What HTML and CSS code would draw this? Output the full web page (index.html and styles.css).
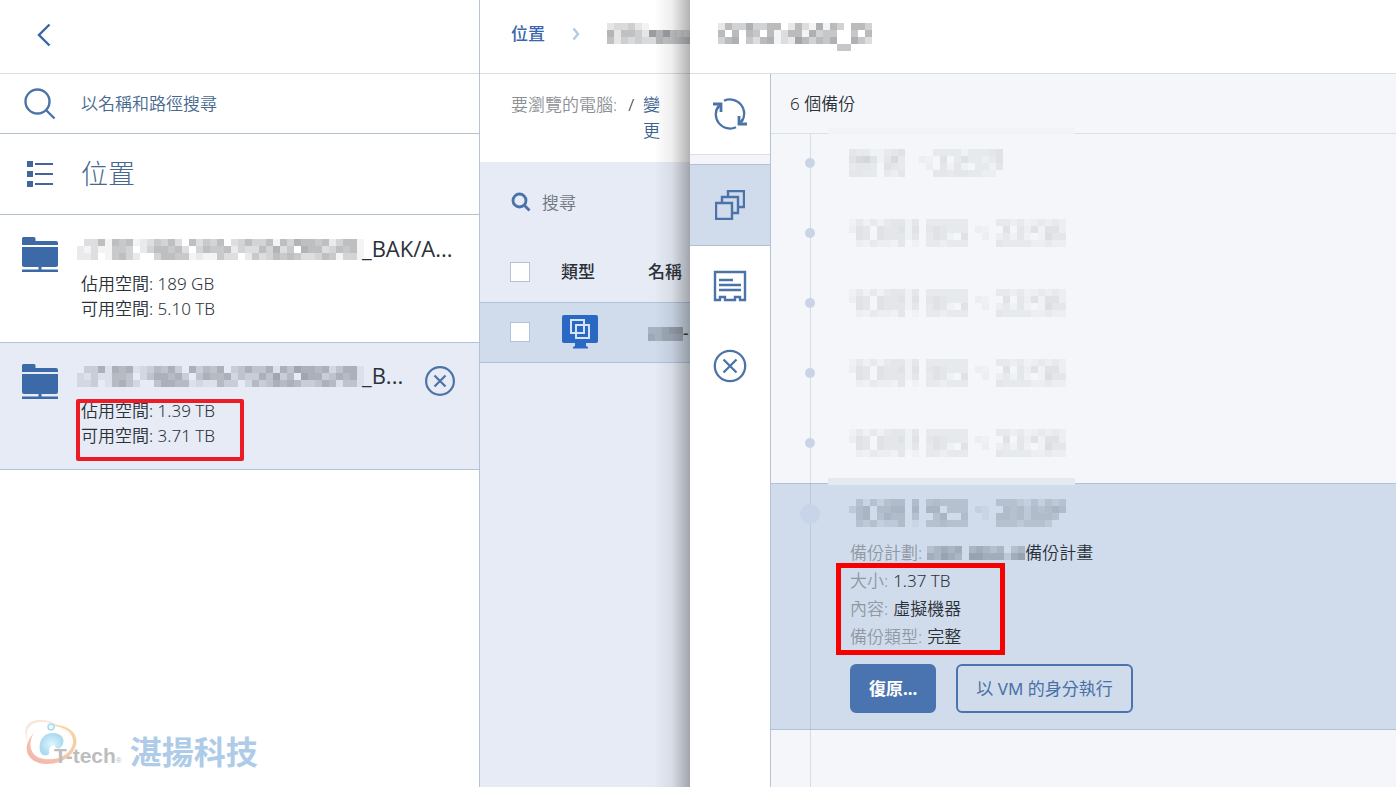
FILE: index.html
```html
<!DOCTYPE html>
<html lang="zh-Hant">
<head>
<meta charset="utf-8">
<title>備份位置</title>
<link rel="stylesheet" href="styles.css">
</head>
<body>
<div class="app">
  <aside class="places">
    <header class="bar places-bar">
      <button class="icon-btn" aria-label="返回"><svg width="14" height="24" viewBox="0 0 14 24"><path d="M12.500 1.500L2 12l10.500 10.500" fill="none" stroke="#3766a8" stroke-width="2.400"/></svg></button>
    </header>
    <label class="find">
      <svg width="32" height="32" viewBox="0 0 32 32" fill="none" stroke="#4c73a8" stroke-width="2.400"><circle cx="13.500" cy="13.500" r="12"/><path d="M22 22l8.500 8.500"/></svg>
      <input class="find-input" type="text" placeholder="以名稱和路徑搜尋">
    </label>
    <div class="places-head">
      <svg width="28" height="28" viewBox="0 0 28 28" fill="#42659c"><path d="M1 1h6v6H1zM1 11h6v6H1zM1 21h6v6H1zM9 3h18v2H9zM9 13h18v2H9zM9 23h18v2H9z"/></svg>
      <h1 class="places-title">位置</h1>
    </div>
    <section class="place">
      <svg class="place-icon" width="36" height="36" viewBox="0 0 36 36" fill="#3c69a7"><path d="M0 1.500Q0 0 1.500 0H12q1.500 0 1.500 1.500V4H34q2 0 2 2v2H0zM0 10h36v18q0 2-2 2H2q-2 0-2-2zM16.500 30h3v3h-3zM0 32.500h36V35H0z"/></svg>
      <div class="place-body">
        <h2 class="place-name"><svg class="mosaic" data-tone="place"></svg>_BAK/A...</h2>
        <p class="place-line">佔用空間: 189 GB</p>
        <p class="place-line">可用空間: 5.10 TB</p>
      </div>
    </section>
    <section class="place place-active">
      <svg class="place-icon" width="36" height="36" viewBox="0 0 36 36" fill="#3c69a7"><path d="M0 1.500Q0 0 1.500 0H12q1.500 0 1.500 1.500V4H34q2 0 2 2v2H0zM0 10h36v18q0 2-2 2H2q-2 0-2-2zM16.500 30h3v3h-3zM0 32.500h36V35H0z"/></svg>
      <div class="place-body">
        <h2 class="place-name"><svg class="mosaic" data-tone="place"></svg>_B...</h2>
        <p class="place-line">佔用空間: 1.39 TB</p>
        <p class="place-line">可用空間: 3.71 TB</p>
        <span class="mark mark-space"></span>
      </div>
      <button class="icon-btn place-remove" aria-label="移除"><svg width="30" height="30" viewBox="0 0 30 30" fill="none" stroke="#4c73a8" stroke-width="2.200"><circle cx="15" cy="15" r="13.900"/><path d="M9.500 9.500l11 11M20.500 9.500l-11 11"/></svg></button>
    </section>
    <footer class="brand">
      <svg width="56" height="48" viewBox="0 0 56 48" fill="none">
        <defs><linearGradient id="ring" x1="0" y1="1" x2="1" y2="0"><stop offset="0" stop-color="#f3b3b0"/><stop offset="1" stop-color="#f8d9a0"/></linearGradient><radialGradient id="drop"><stop offset="0" stop-color="#e0f5fc"/><stop offset="1" stop-color="#a9daf0"/></radialGradient></defs>
        <path d="M4 24C-3 9 4-1 20 1c12 2 22 9 28 17C40 9 28 3 18 3 6 3 0 10 4 24z" fill="#fae6da"/>
        <path d="M24 7C46 3 58 17 50 31 43 43 28 47 15 44-1 39 0 24 10 14 3 25 6 38 20 40c15 2 27-5 29-16C50 13 40 6 24 7z" fill="url(#ring)"/>
        <circle cx="27" cy="8" r="3" stroke="#a9daf0" stroke-width="1.500" fill="#eefaff"/>
        <path d="M16 32c-2-11 4-18 13-18 9 0 13 7 9 13-3 4-8 3-7-1-6 0-6 5-6 9-4 3-8 1-9-3z" fill="url(#drop)"/>
      </svg>
      <span class="brand-latin">T-tech<small class="brand-reg">®</small></span>
      <span class="brand-name">湛揚科技</span>
    </footer>
  </aside>

  <main class="browse">
    <header class="bar crumbs">
      <a class="crumb" href="#">位置</a>
      <svg width="8" height="14" viewBox="0 0 8 14"><path d="M1.500 1.500L6 7l-4.500 5.500" fill="none" stroke="#b4cae4" stroke-width="2.400"/></svg>
      <svg class="mosaic" data-tone="crumb"></svg>
    </header>
    <div class="machine">
      <span class="machine-label">要瀏覽的電腦:</span>
      <span class="machine-name">/</span>
      <a class="machine-change" href="#">變更</a>
    </div>
    <div class="grid-area">
      <label class="grid-find">
        <svg width="20" height="20" viewBox="0 0 20 20" fill="none" stroke="#4c73a8" stroke-width="2.800"><circle cx="8.500" cy="8.500" r="6.500"/><path d="M13 13l5.500 5.500"/></svg>
        <input class="grid-input" type="text" placeholder="搜尋">
      </label>
      <table class="machines">
        <thead><tr><th class="c-check"><input class="check" type="checkbox" aria-label="全選"></th><th class="c-type">類型</th><th>名稱</th></tr></thead>
        <tbody><tr class="picked"><td class="c-check"><input class="check" type="checkbox" aria-label="選取電腦"></td>
          <td class="c-type"><svg class="vm" width="36" height="34" viewBox="0 0 36 34"><path d="M2 0h32q2 0 2 2v24q0 2-2 2H24v3l2 1v1.500H11V32l2-1v-3H2q-2 0-2-2V2q0-2 2-2z" fill="#2a68c4"/><path d="M9 5h13v13H9zM14 10h13v13H14z" fill="none" stroke="#d3e3f8" stroke-width="2"/></svg></td>
          <td class="c-name"><svg class="mosaic" data-tone="name"></svg>-</td></tr></tbody>
      </table>
    </div>
  </main>

  <section class="drawer">
    <header class="bar drawer-bar"><svg class="mosaic" data-tone="title"></svg></header>
    <div class="drawer-main">
      <nav class="rail">
        <button class="rail-btn rail-refresh" aria-label="重新整理"><svg width="34" height="32" viewBox="0 0 34 32" fill="none" stroke="#4c73a8" stroke-width="2.300"><path d="M11 2.800A14.200 14.200 0 0 1 28.500 24M23 29.200A14.200 14.200 0 0 1 5.500 8"/><path d="M0 6h8v8M34 26h-8v-8" stroke-width="2.800"/><path d="M8 6L4 11M26 26l4-5"/></svg></button>
        <button class="rail-btn rail-on" aria-label="備份"><svg width="30" height="30" viewBox="0 0 30 30" fill="none" stroke="#4c73a8" stroke-width="2.400"><path d="M1 13h16v16H1zM7 13V7h16v16h-6M13 7V1h16v16h-6"/></svg></button>
        <button class="rail-btn" aria-label="記錄"><svg width="34" height="32" viewBox="0 0 34 32" fill="none" stroke="#4c73a8" stroke-width="2.400"><path d="M2 2h30v28h-5v-3h-5v3H12v-3H7v3H2zM6 10h14M6 15h22M6 20h22"/></svg></button>
        <button class="rail-btn" aria-label="關閉"><svg width="34" height="34" viewBox="0 0 34 34" fill="none" stroke="#4c73a8" stroke-width="2.300"><circle cx="17" cy="17" r="15.200"/><path d="M10.500 10.500l13 13M23.500 10.500l-13 13"/></svg></button>
      </nav>
      <div class="backups">
        <h2 class="backups-count">6 個備份</h2>
        <ol class="timeline">
          <li class="entry"><span class="smudge"></span><svg class="mosaic" data-tone="today"></svg></li>
          <li class="entry"><svg class="mosaic" data-tone="date"></svg></li>
          <li class="entry"><svg class="mosaic" data-tone="date"></svg></li>
          <li class="entry"><svg class="mosaic" data-tone="date"></svg></li>
          <li class="entry"><svg class="mosaic" data-tone="date"></svg></li>
          <li class="entry entry-open"><span class="smudge"></span><svg class="mosaic" data-tone="open"></svg>
            <dl class="facts">
              <div class="fact"><dt>備份計劃:</dt><dd><svg class="mosaic" data-tone="plan"></svg>備份計畫</dd></div>
              <div class="fact"><dt>大小:</dt><dd>1.37 TB</dd></div>
              <div class="fact"><dt>內容:</dt><dd>虛擬機器</dd></div>
              <div class="fact"><dt>備份類型:</dt><dd>完整</dd></div>
            </dl>
            <span class="mark mark-facts"></span>
            <div class="actions"><button class="btn btn-fill">復原...</button><button class="btn btn-line">以 VM 的身分執行</button></div>
          </li>
        </ol>
      </div>
    </div>
  </section>
</div>
<script src="mosaic.js"></script>
</body>
</html>
```
FILE: styles.css
```css
* { box-sizing: border-box; }
body, h1, h2, p, ol, dl, dd { margin: 0; padding: 0; }
body { font: 350 17px/25px "Noto Sans", "Noto Sans CJK TC", sans-serif; color: #2b3138; background: #fff; }
button, input { font: inherit; color: inherit; }
a { text-decoration: none; }
svg { display: block; flex: none; }
.app { display: flex; min-height: 100vh; overflow: hidden; }
.bar { display: flex; align-items: center; height: 74px; border-bottom: 1px solid #d5e0ea; }
.icon-btn { display: block; padding: 0; border: 0; background: none; }

.places { display: flex; flex-direction: column; flex: 0 0 480px; border-right: 1px solid #b4c4d6; }
.places-bar { padding: 0 37px 4px; }
.find { display: flex; align-items: center; gap: 25px; height: 60px; padding: 0 24px; border-bottom: 1px solid #b4c2ce; }
.find-input { flex: 1; min-width: 0; padding: 0; border: 0; outline: 0; background: none; }
.find-input::placeholder { color: #48698f; opacity: 1; }
.places-head { display: flex; align-items: center; gap: 27px; height: 81px; padding: 0 26px; border-bottom: 1px solid #b4c2ce; }
.places-title { font-size: 27px; line-height: 40px; font-weight: 300; color: #48698f; }
.place { position: relative; display: flex; gap: 19px; height: 128px; padding: 22px 22px 0; border-bottom: 1px solid #b4c4d6; }
.place-active { height: 127px; padding-top: 21px; background: #e6ebf5; }
.place-body { position: relative; flex: 1; min-width: 0; padding-left: 4px; }
.place-name { display: flex; align-items: flex-start; height: 24px; line-height: 22px; margin: 0 0 10px -4px; font: 400 22px/22px "Open Sans", "Noto Sans", sans-serif; white-space: nowrap; }
.place-name .mosaic { margin: 2px -2px 0 0; }
.place-remove { position: absolute; right: 24px; top: 23px; }
.mark { position: absolute; }
.mark-space { left: -1px; top: 35px; width: 168px; height: 62px; border: 4px solid #ed1c24; border-radius: 2px; }
.brand { display: flex; align-items: flex-end; margin-top: auto; padding: 0 24px 20px; }
.brand-latin { margin-left: -26px; color: #bdbdbd; font: bold 21px/12px "Liberation Sans", sans-serif; }
.brand-reg { font-size: 8px; font-weight: 400; }
.brand-name { margin-left: 8px; color: #aecbe8; font-size: 32px; line-height: 30px; font-weight: 700; }

.browse { flex: 0 0 210px; min-width: 0; overflow: hidden; display: flex; flex-direction: column; }
.crumbs { padding: 0 0 6px 31px; gap: 27px; }
.crumb { flex: none; color: #3867ad; font-weight: 500; white-space: nowrap; }
.machine { display: flex; height: 88px; padding: 18px 27px 0 31px; line-height: 26px; }
.machine-label { flex: none; white-space: nowrap; color: #8d9093; }
.machine-name { flex: none; margin: 0 9px 0 11px; }
.machine-change { width: 18px; flex: none; color: #3e618f; word-break: break-all; }
.grid-area { flex: 1; background: #e6ebf5; }
.grid-find { display: flex; align-items: center; gap: 11px; height: 80px; padding-left: 31px; }
.grid-input { width: 100px; padding: 0; border: 0; outline: 0; background: none; }
.grid-input::placeholder { color: #707780; opacity: 1; }
.machines { width: 100%; table-layout: fixed; border-collapse: collapse; }
.machines th, .machines td { height: 60px; padding: 0; text-align: left; font-weight: 500; white-space: nowrap; }
.machines .c-check { width: 81px; padding-left: 30px; }
.c-type { width: 87px; }
.picked { background: #d0dcec; border-top: 1px solid #b1c2d8; border-bottom: 1px solid #b1c2d8; }
.check { appearance: none; display: block; width: 20px; height: 20px; margin: 0; border: 1px solid #b3c3de; background: #fff; }
.vm { margin-left: 1px; }
.c-name .mosaic { display: inline-block; vertical-align: middle; }

.drawer { position: relative; display: flex; flex-direction: column; flex: 1; min-width: 0; background: #fff; }
.drawer::before { content: ""; position: absolute; right: 100%; top: 0; bottom: 0; width: 36px; background: linear-gradient(to right, rgba(40,40,40,0), rgba(40,40,40,.08) 50%, rgba(40,40,40,.36)); }
.drawer-bar { padding: 1px 28px 0; }
.drawer-main { display: flex; flex: 1; }
.rail { flex: 0 0 81px; border-right: 1px solid #b4c4d6; }
.rail-btn { display: flex; align-items: center; justify-content: center; width: 100%; height: 80px; padding: 0; border: 0; background: #fff; }
.rail-refresh { height: 81px; border-bottom: 1px solid #dde1e4; }
.rail-on { height: 82px; margin: 9px 0 0; box-shadow: 0 -9px #f4f5f8; background: #d0dcec; border-top: 1px solid #b1c2d8; border-bottom: 1px solid #b1c2d8; }
.backups { display: flex; flex-direction: column; flex: 1; min-width: 0; background: #f4f6f9; }
.backups-count { height: 60px; padding: 17px 19px; border-bottom: 1px solid #dae1e5; font-size: 17px; font-weight: 350; }
.timeline { position: relative; flex: 1; list-style: none; }
.timeline::before { content: ""; position: absolute; z-index: 1; left: 39px; top: 0; bottom: 0; width: 1px; background: rgba(140,165,185,.3); }
.entry { position: relative; height: 70px; padding: 15px 20px 0 78px; }
.entry::before { content: ""; position: absolute; z-index: 2; left: 34px; top: 24px; width: 10px; height: 10px; border-radius: 50%; background: #c9d5e7; }
.entry-open { height: auto; margin-top: -1px; padding-bottom: 16px; background: #d0dcec; border-top: 1px solid #b1c2d8; border-bottom: 1px solid #b1c2d8; }
.entry-open::before { left: 29px; top: 20px; width: 20px; height: 20px; background: #c7d4e9; }
.smudge { position: absolute; left: 57px; top: -6px; width: 247px; height: 7px; background: #f1f3f5; }
.entry-open .smudge { background: #e5eaf1; }
.facts { padding: 12px 0 0 1px; line-height: 28px; }
.fact { display: flex; gap: 5px; }
.fact dt { color: #8f98a3; }
.fact dd { display: flex; align-items: center; }
.mark-facts { left: 65px; top: 79px; width: 169px; height: 92px; border: 5px solid #f70000; }
.actions { display: flex; gap: 20px; padding: 13px 0 0 1px; }
.btn { height: 49px; padding: 0 17px; border: 2px solid #4a74b0; border-radius: 6px; }
.btn-fill { background: #4a74b0; color: #fff; font-weight: 700; }
.btn-line { padding: 0 18px; background: none; color: #4a70a5; font-weight: 400; }
```
FILE: mosaic.js
```javascript
// Blocks that hide private names. Each digit is the darkness of one cell.
const cellSize = 7;
const patterns = {
  place: { k: 0.048, rows: [
    "03361656123546306354603464461647665624661",
    "21311554024665630465562433647350766346561",
    "22301564200466551211533025346565334651441"] },
  crumb: { k: 0.055, rows: ["233421000000", "625542868543", "524343365555"] },
  title: { k: 0.05, rows: [
    "2644744660263171640664", "6060650613661745500506",
    "4670536713286465700753", "0000000000000000055000"] },
  name: { k: 0.055, rows: ["44566", "54555"] },
  plan: { k: 0.05, rows: ["34545045434034", "54654066555256"] },
  today: { k: 0.018, rows: [
    "4331134500003333133345", "5785147300210503533235",
    "3443054300020414103314", "4433032400004434433220"] },
  date: { k: 0.018, rows: [
    "1313134414033333300003323123232", "2540544515045433302100504251552",
    "0540544414035410500202314101644", "0213221401033233300004333322322"] },
  open: { k: 0.034, rows: [
    "0414245505045444400004443242434", "3560556606066044402100545354565",
    "0560465504004600500105545355540", "0434233501044544400004443444300"] }
};
document.querySelectorAll(".mosaic").forEach(svg => {
  const { k, rows } = patterns[svg.dataset.tone];
  svg.setAttribute("width", rows[0].length * cellSize);
  svg.setAttribute("height", rows.length * cellSize);
  svg.setAttribute("aria-hidden", "true");
  rows.forEach((row, y) => [...row].forEach((digit, x) => {
    const cell = document.createElementNS("http://www.w3.org/2000/svg", "rect");
    cell.setAttribute("x", x * cellSize);
    cell.setAttribute("y", y * cellSize);
    cell.setAttribute("width", cellSize);
    cell.setAttribute("height", cellSize);
    cell.setAttribute("fill", "rgba(25,30,38," + (digit * k) + ")");
    svg.append(cell);
  }));
});
```
